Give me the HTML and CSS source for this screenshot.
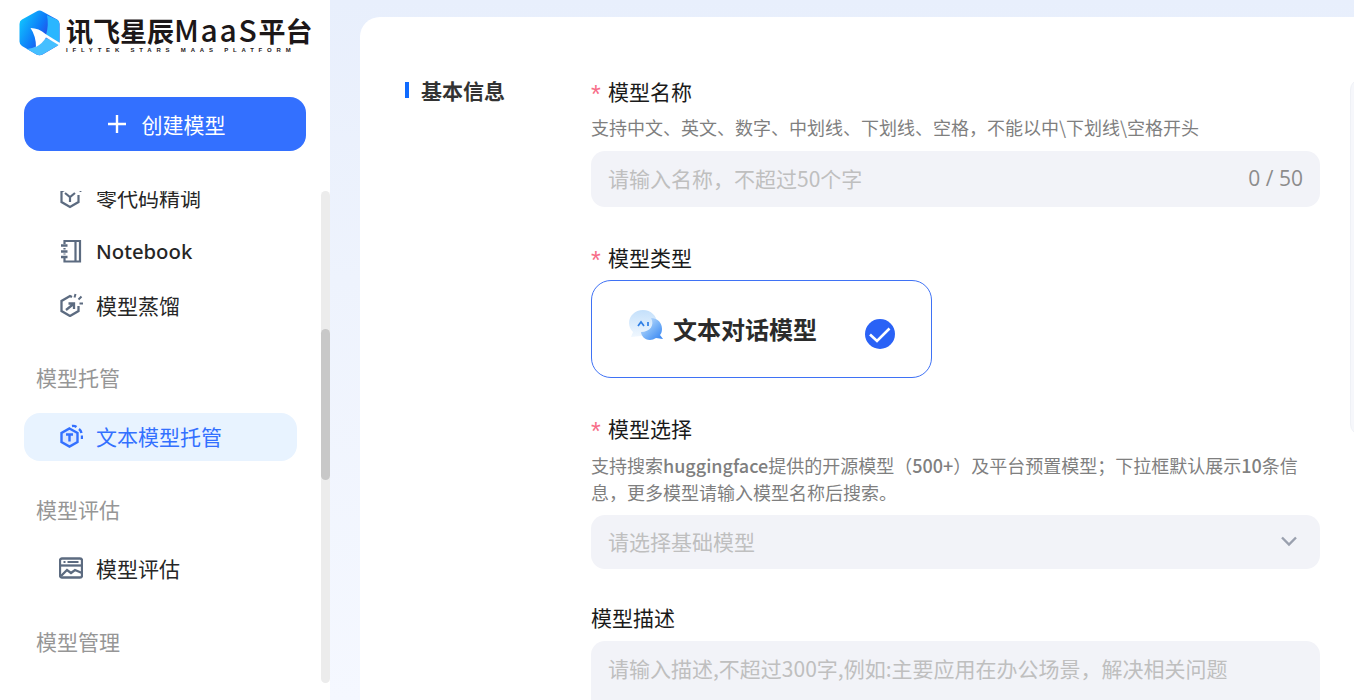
FILE: index.html
```html
<!DOCTYPE html>
<html lang="zh-CN">
<head>
    <meta charset="UTF-8">
    <title>讯飞星辰MaaS平台 - 创建模型</title>
    <link rel="stylesheet" href="styles.css">
</head>
<body>
    <div class="layout">
        <aside class="sidebar">
            <div class="logo">
                <svg class="logo-mark" width="41" height="46" viewBox="0 0 41 46">
                    <defs>
                        <linearGradient id="logoLeft" x1="0" y1="0.3" x2="0.75" y2="0.75">
                            <stop offset="0" stop-color="#10bdfd"/>
                            <stop offset="0.55" stop-color="#0e78f8"/>
                            <stop offset="1" stop-color="#3a35dc"/>
                        </linearGradient>
                    </defs>
                    <path d="M17.5 1.4 Q20.5 -0.2 23.5 1.4 L38 9.6 Q40.5 11 40.5 14 L40.5 31.5 Q40.5 34.5 38 36 L23.5 44.4 Q20.5 46 17.5 44.4 L3 36 Q0.5 34.5 0.5 31.5 L0.5 14 Q0.5 11 3 9.6 Z" fill="url(#logoLeft)"/>
                    <path d="M28 5.2 L38 9.6 Q40.5 11 40.5 14 L40.5 33 L27 25 Q30 15 28 5.2 Z" fill="#2ab6ff"/>
                    <path d="M40.5 34 Q40 35 38 36 L23.5 44.4 Q20.5 46 17.5 44.4 L8 39 Q19 38 27 28 Z" fill="#45bfff"/>
                    <path d="M11.5 18 Q20 18 26.5 24 L41 33 L40.5 35.5 L27 27.5 Q24 33 17 37 Q17 26 11.5 18 Z" fill="#fff"/>
                </svg>
                <div class="logo-text">
                    <div class="logo-name">讯飞星辰<span class="logo-latin">MaaS</span>平台</div>
                    <div class="logo-sub">IFLYTEK STARS MAAS PLATFORM</div>
                </div>
            </div>

            <button type="button" class="create-btn">
                <svg width="20" height="20" viewBox="0 0 20 20"><path d="M10 1 V19 M1 10 H19" stroke="#fff" stroke-width="2.4" fill="none"/></svg>
                <span>创建模型</span>
            </button>

            <div class="menu-wrap">
                <nav class="menu">
                    <a class="menu-item menu-item-cut">
                        <svg class="menu-icon" viewBox="0 0 24 24" fill="none" stroke="#5c6b80" stroke-width="2.2">
                            <path d="M14 3.5 L11 2 L2.5 6.5 V17 L11 22 L19.5 17 V10"/>
                            <path d="M6 8 L11 12 L16 8 M11 12 V17"/>
                            <path d="M21.5 1 V7 M18.5 4 H24" stroke-width="1.8"/>
                        </svg>
                        <span>零代码精调</span>
                    </a>
                    <a class="menu-item">
                        <svg class="menu-icon menu-icon-book" viewBox="0 0 24 24" fill="none" stroke="#5c6b80" stroke-width="2.2">
                            <path d="M5.5 5 V2 H21 V22.5 H5.5 V19"/>
                            <path d="M5.5 9 V10.5 M5.5 14.5 V15.5"/>
                            <path d="M16.5 2 V22.5"/>
                            <path d="M2 6.5 H8.5 M2 12.5 H8.5 M2 18 H8.5" stroke-width="2.4"/>
                        </svg>
                        <span class="menu-latin">Notebook</span>
                    </a>
                    <a class="menu-item">
                        <svg class="menu-icon" viewBox="0 0 24 24" fill="none" stroke="#5c6b80" stroke-width="2.3">
                            <path d="M13 4 L11 3 L2.5 8 V18 L11 23 L19.5 18 V13"/>
                            <path d="M7 17 L14.5 11 M9.5 10.5 H15 V16"/>
                            <path d="M16.5 1 L15.5 4.5 M22.5 3.5 L19.5 6.5 M24 10.5 H20.5" stroke-width="2"/>
                        </svg>
                        <span>模型蒸馏</span>
                    </a>

                    <div class="menu-title">模型托管</div>
                    <a class="menu-item menu-item-active">
                        <svg class="menu-icon" viewBox="0 0 24 24" fill="none" stroke="#3370ff" stroke-width="2.4">
                            <path d="M10.5 4.5 L18.5 9 V18 L10.5 22.5 L2.5 18 V9 Z" fill="#dbe7ff"/>
                            <path d="M7 10.5 H14 M10.5 10.5 V17.5"/>
                            <path d="M13 2 Q15.5 1.5 17.5 3 M20 5 Q22 6.5 22.5 9 M23 11.5 V15"/>
                        </svg>
                        <span>文本模型托管</span>
                    </a>

                    <div class="menu-title menu-title-eval">模型评估</div>
                    <a class="menu-item menu-item-eval">
                        <svg class="menu-icon" viewBox="0 0 24 24" fill="none" stroke="#5c6b80" stroke-width="2.3">
                            <rect x="1" y="2.5" width="22" height="19" rx="2"/>
                            <path d="M1 9.5 H23"/>
                            <path d="M4.5 6 H6.5 M8.5 6 H19.5" stroke-width="1.8"/>
                            <path d="M2 20 L8 14 L12 17 L16 14 L23 17"/>
                        </svg>
                        <span>模型评估</span>
                    </a>

                    <div class="menu-title menu-title-manage">模型管理</div>
                </nav>
                <div class="scroll-track"><div class="scroll-thumb"></div></div>
            </div>
        </aside>

        <main class="main">
            <section class="card">
                <div class="section-side">
                    <h2 class="section-title">基本信息</h2>
                </div>

                <form class="form">
                    <label class="field-label"><i class="req">*</i>模型名称</label>
                    <p class="hint">支持中文、英文、数字、中划线、下划线、空格，不能以中\下划线\空格开头</p>
                    <div class="input-box">
                        <span class="placeholder">请输入名称，不超过50个字</span>
                        <span class="counter">0 / 50</span>
                    </div>

                    <label class="field-label field-label-gap"><i class="req">*</i>模型类型</label>
                    <div class="type-card">
                        <svg class="type-icon" width="36" height="32" viewBox="0 0 36 32">
                            <defs>
                                <linearGradient id="bubbleBack" x1="0" y1="0" x2="0" y2="1">
                                    <stop offset="0" stop-color="#c4e0fb"/>
                                    <stop offset="1" stop-color="#f0f7fe"/>
                                </linearGradient>
                                <linearGradient id="bubbleFront" x1="0" y1="0" x2="1" y2="1">
                                    <stop offset="0" stop-color="#d6e9fc"/>
                                    <stop offset="0.5" stop-color="#7db6f8"/>
                                    <stop offset="1" stop-color="#2f80f2"/>
                                </linearGradient>
                            </defs>
                            <path d="M15 0 C23 0 29 6 29 13 C29 21 22 26 13 26 L3 27 L5 22 C2 19 1 16 1 13 C1 6 7 0 15 0 Z" fill="url(#bubbleBack)"/>
                            <path d="M23 8 C30 8 34 13 34 19 C34 22 33 24 32 25 L35 29 L28 28 C26 29 24 30 22 30 C16 30 13 25 13 22 C22 22 27 15 23 8 Z" fill="url(#bubbleFront)"/>
                            <path d="M10 16 L13 12 L16 16 M20 12 V16" stroke="#2f7fe6" stroke-width="1.7" fill="none"/>
                        </svg>
                        <span class="type-name">文本对话模型</span>
                        <svg class="type-check" width="30" height="30" viewBox="0 0 30 30">
                            <circle cx="15" cy="15" r="15" fill="#2a62f6"/>
                            <path d="M5 15.5 L12 22 L24.5 9.5" stroke="#fff" stroke-width="2.6" fill="none"/>
                        </svg>
                    </div>

                    <label class="field-label field-label-gap"><i class="req">*</i>模型选择</label>
                    <p class="hint hint-wrap">支持搜索<b>huggingface</b>提供的开源模型（<b>500+</b>）及平台预置模型；下拉框默认展示<b>10</b>条信息，更多模型请输入模型名称后搜索。</p>
                    <div class="input-box select-box">
                        <span class="placeholder">请选择基础模型</span>
                        <svg width="18" height="12" viewBox="0 0 18 12"><path d="M2 2.5 L9 9.5 L16 2.5" stroke="#9aa0ae" stroke-width="2.4" fill="none"/></svg>
                    </div>

                    <label class="field-label field-label-gap field-label-last">模型描述</label>
                    <div class="input-box textarea-box">
                        <span class="placeholder">请输入描述,不超过300字,例如:主要应用在办公场景，解决相关问题</span>
                    </div>
                </form>

                <div class="side-panel"></div>
            </section>
        </main>
    </div>
</body>
</html>
```

FILE: styles.css
```css
* {
    box-sizing: border-box;
}

html, body {
    height: 100%;
}

body {
    margin: 0;
    overflow: hidden;
    font-family: "Noto Sans CJK SC", "Liberation Sans", sans-serif;
    color: #262626;
    background: #fff;
}

.layout {
    display: flex;
    height: 700px;
    overflow: hidden;
}

/* sidebar */
.sidebar {
    flex: 0 0 330px;
    display: flex;
    flex-direction: column;
    height: 700px;
    background: #fff;
}

.logo {
    display: flex;
    align-items: flex-start;
    gap: 6px;
    height: 97px;
    padding: 10px 0 0 19px;
}

.logo-text {
    padding-top: 2px;
}

.logo-name {
    font-size: 27px;
    line-height: 35px;
    height: 35px;
    font-weight: 700;
    color: #1c1718;
    white-space: nowrap;
}

.logo-latin {
    font-size: 30px;
    font-weight: 500;
    letter-spacing: 1.7px;
}

.logo-sub {
    font-family: "Liberation Sans", sans-serif;
    font-size: 6px;
    line-height: 6px;
    font-weight: 700;
    letter-spacing: 4.8px;
    color: #1c1718;
    white-space: nowrap;
}

.create-btn {
    display: flex;
    align-items: center;
    justify-content: center;
    gap: 15px;
    flex: 0 0 54px;
    width: 282px;
    margin-left: 24px;
    padding-left: 8px;
    border: none;
    border-radius: 16px;
    background: #3370ff;
    color: #fff;
    font-family: inherit;
    font-size: 21px;
}

.menu-wrap {
    display: flex;
    flex: 0 0 492px;
    margin-top: 40px;
    overflow: hidden;
}

.menu {
    flex: 1;
    min-width: 0;
    padding: 0 24px;
    overflow: hidden;
}

.menu-item {
    display: flex;
    align-items: center;
    gap: 13px;
    height: 54px;
    padding-left: 35px;
    font-size: 21px;
    color: #262626;
}

.menu-item-cut {
    height: 55px;
    margin-top: -22px;
}

.menu-item-active {
    height: 48px;
    margin-top: 20px;
    padding-bottom: 2px;
    border-radius: 16px;
    background: #e8f3ff;
    color: #3370ff;
}

.menu-item-eval {
    margin-top: 16px;
}

.menu-latin {
    font-family: "Noto Sans", sans-serif;
    font-size: 20.3px;
    font-weight: 500;
}

.menu-icon {
    flex: 0 0 24px;
    width: 24px;
    height: 24px;
}

.menu-title {
    height: 32px;
    margin-top: 29px;
    padding-left: 12px;
    font-size: 21px;
    line-height: 32px;
    color: #969696;
}

.menu-title-eval {
    margin-top: 32px;
}

.menu-title-manage {
    margin-top: 30px;
}

.scroll-track {
    flex: 0 0 9px;
    height: 492px;
    border-radius: 5px;
    background: #ececec;
}

.scroll-thumb {
    width: 9px;
    height: 151px;
    margin-top: 138px;
    border-radius: 5px;
    background: #c8c8c8;
}

/* main area */
.main {
    flex: 1;
    min-width: 0;
    padding: 17px 0 0 30px;
    background: linear-gradient(180deg, #e8effc 0, #eef3fd 40%, #f5f8ff 100%);
}

.card {
    display: flex;
    height: 720px;
    padding-top: 59px;
    border-radius: 20px 0 0 0;
    background: #fff;
}

.section-side {
    flex: 0 0 231px;
    padding-left: 45px;
}

.section-title {
    display: flex;
    align-items: center;
    height: 28px;
    margin: 0;
    font-size: 21px;
    font-weight: 700;
    color: #333;
}

.section-title::before {
    content: "";
    width: 4px;
    height: 16px;
    margin-right: 12px;
    background: #0f6bff;
}

.form {
    flex: 0 0 729px;
}

.field-label {
    display: block;
    height: 30px;
    font-size: 21px;
    line-height: 30px;
    color: #1a1a1a;
}

.field-label-gap {
    margin-top: 35px;
}

.field-label-last {
    margin-top: 33px;
}

.req {
    display: inline-block;
    width: 17px;
    font-family: "Liberation Sans", sans-serif;
    font-size: 25px;
    line-height: 20px;
    vertical-align: -3px;
    font-style: normal;
    color: #f76d88;
}

.hint {
    margin: 8px 0 10px;
    font-size: 18px;
    line-height: 27px;
    color: #7f7f7f;
}

.hint b {
    font-weight: 500;
}

.hint-wrap {
    margin: 9px 0;
}

.input-box {
    display: flex;
    align-items: center;
    justify-content: space-between;
    height: 56px;
    padding: 0 17px 2px 17px;
    border-radius: 14px;
    background: #f2f3f8;
    font-size: 21px;
}

.select-box {
    height: 54px;
    padding-right: 22px;
}

.textarea-box {
    align-items: flex-start;
    height: 120px;
    margin-top: 9px;
    padding-top: 12px;
}

.placeholder {
    color: #bfbfbf;
}

.counter {
    color: #8c8c8c;
    font-family: "Open Sans", sans-serif;
}

.type-card {
    display: flex;
    align-items: center;
    width: 341px;
    height: 98px;
    margin-top: 8px;
    padding: 0 36px 0 36px;
    border: 1px solid #3f72f5;
    border-radius: 20px;
    background: #fff;
}

.type-icon {
    margin: -6px 9px 0 0;
}

.type-name {
    flex: 1;
    margin-top: -2px;
    font-size: 24px;
    font-weight: 700;
    color: #2b2b2b;
    white-space: nowrap;
}

.type-check {
    margin-top: 10px;
}

.side-panel {
    flex: 0 0 40px;
    height: 358px;
    margin: 2px 0 0 30px;
    border: 1px solid #eff1f6;
    border-radius: 12px 0 0 12px;
    background: #f6f7fb;
}
```
